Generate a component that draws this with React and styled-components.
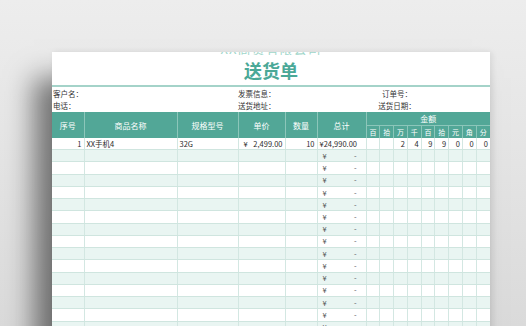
import React from 'react';
import styled, { createGlobalStyle } from 'styled-components';

const GlobalStyle = createGlobalStyle`
  html, body {
    margin: 0;
    padding: 0;
    width: 526px;
    height: 326px;
    overflow: hidden;
    font-family: "Noto Sans CJK SC", "Noto Sans", sans-serif;
  }
`;

const cols = [32, 93, 61, 47, 32, 49];
const digitLabels = ['百', '拾', '万', '千', '百', '拾', '元', '角', '分'];
const firstDigits = ['', '', '2', '4', '9', '9', '0', '0', '0'];
const emptyRows = 16;

const App = () => {
  return (
    <Page>
      <GlobalStyle />
      <Paper>
        <CompanyClip>
          <Company>XX商贸有限公司</Company>
        </CompanyClip>
        <Title>送货单</Title>
        <TitleRule />
        <Info>
          <InfoLabel>客户名：</InfoLabel>
          <InfoLabel>发票信息：</InfoLabel>
          <InfoLabel $center>订单号：</InfoLabel>
          <InfoLabel>电话：</InfoLabel>
          <InfoLabel>送货地址：</InfoLabel>
          <InfoLabel $center>送货日期：</InfoLabel>
        </Info>
        <Sheet>
          <colgroup>
            {cols.map((w, i) => (
              <col key={i} style={{ width: w }} />
            ))}
            {digitLabels.map((_, i) => (
              <col key={'d' + i} style={{ width: 13.78 }} />
            ))}
          </colgroup>
          <thead>
            <tr>
              <Th rowSpan={2}>序号</Th>
              <Th rowSpan={2}>商品名称</Th>
              <Th rowSpan={2}>规格型号</Th>
              <Th rowSpan={2}>单价</Th>
              <Th rowSpan={2}>数量</Th>
              <Th rowSpan={2}>总计</Th>
              <Th colSpan={9} $top>金额</Th>
            </tr>
            <tr>
              {digitLabels.map((d, i) => (
                <SubTh key={i}>{d}</SubTh>
              ))}
            </tr>
          </thead>
          <tbody>
            <Row>
              <Td $align="right">1</Td>
              <Td>XX手机4</Td>
              <Td>32G</Td>
              <Td>
                <Money>
                  <span>¥</span>
                  <span>2,499.00</span>
                </Money>
              </Td>
              <Td $align="right">10</Td>
              <Td>¥24,990.00</Td>
              {firstDigits.map((d, i) => (
                <Digit key={i}>{d}</Digit>
              ))}
            </Row>
            {Array.from({ length: emptyRows }).map((_, r) => (
              <Row key={r} $striped={r % 2 === 0}>
                <Td />
                <Td />
                <Td />
                <Td />
                <Td />
                <Td>
                  <Money $soft>
                    <span>¥</span>
                    <span>-</span>
                  </Money>
                </Td>
                {digitLabels.map((_, i) => (
                  <Digit key={i} />
                ))}
              </Row>
            ))}
          </tbody>
        </Sheet>
      </Paper>
    </Page>
  );
};

const Page = styled.div`
  width: 526px;
  height: 326px;
  overflow: hidden;
  background: linear-gradient(180deg, #ededed 0%, #e5e5e5 45%, #dadada 100%);
  padding: 52px 0 0 52px;
  box-sizing: border-box;
`;

const Paper = styled.div`
  width: 438px;
  height: 300px;
  background: #ffffff;
  overflow: hidden;
  display: flex;
  flex-direction: column;
  box-shadow: -18px 26px 26px rgba(0, 0, 0, 0.5), 2px 0 6px rgba(0, 0, 0, 0.08);
`;

const CompanyClip = styled.div`
  height: 3px;
  flex-shrink: 0;
  overflow: hidden;
  position: relative;
`;

const Company = styled.div`
  position: absolute;
  left: 0;
  right: 0;
  bottom: 0;
  text-align: center;
  color: #9fd6ca;
  font-size: 13px;
  line-height: 13px;
  letter-spacing: 1px;
`;

const Title = styled.div`
  color: #4aa897;
  font-size: 18px;
  font-weight: 700;
  height: 30px;
  flex-shrink: 0;
  display: flex;
  align-items: center;
  justify-content: center;
`;

const TitleRule = styled.div`
  height: 2px;
  flex-shrink: 0;
  background: #a4d3c9;
`;

const Info = styled.div`
  display: grid;
  grid-template-columns: 185px 130px 60px;
  grid-auto-rows: 12.5px;
  align-items: center;
`;

const InfoLabel = styled.div`
  font-size: 7.5px;
  color: #333;
  padding-left: ${(p) => (p.$center ? '0' : '1px')};
  text-align: ${(p) => (p.$center ? 'center' : 'left')};
`;

const Sheet = styled.table`
  border-collapse: collapse;
  table-layout: fixed;
  width: 438px;
  font-size: 7.5px;
  color: #2c2c2c;
`;

const Th = styled.th`
  background: #52a797;
  color: #ffffff;
  font-weight: 400;
  font-size: 8px;
  height: ${(p) => (p.$top ? '12px' : '26px')};
  padding: 0;
  border-left: 1px solid #8cc6ba;
  border-bottom: ${(p) => (p.$top ? '1px solid #8cc6ba' : 'none')};
  &:first-child {
    border-left: none;
  }
`;

const SubTh = styled.th`
  background: #52a797;
  color: #ffffff;
  font-weight: 400;
  font-size: 7px;
  height: 12px;
  padding: 0;
  border-left: 1px solid #8cc6ba;
`;

const Row = styled.tr`
  height: 11.2px;
  background: ${(p) => (p.$striped ? '#e9f5f2' : '#ffffff')};
`;

const Td = styled.td`
  padding: 0 2px;
  height: 11.2px;
  line-height: 10px;
  white-space: nowrap;
  overflow: hidden;
  text-align: ${(p) => p.$align || 'left'};
  border-left: 1px solid #d3e7e2;
  border-bottom: 1px solid #cfe5df;
  &:first-child {
    border-left: none;
  }
`;

const Digit = styled.td`
  padding: 0 2px 0 0;
  height: 11.2px;
  line-height: 10px;
  text-align: right;
  border-left: 1px solid #d3e7e2;
  border-bottom: 1px solid #cfe5df;
`;

const Money = styled.div`
  display: flex;
  justify-content: space-between;
  padding: ${(p) => (p.$soft ? '0 7px 0 3px' : '0 0 0 3px')};
  color: ${(p) => (p.$soft ? '#555' : '#2c2c2c')};
`;

export default App;
